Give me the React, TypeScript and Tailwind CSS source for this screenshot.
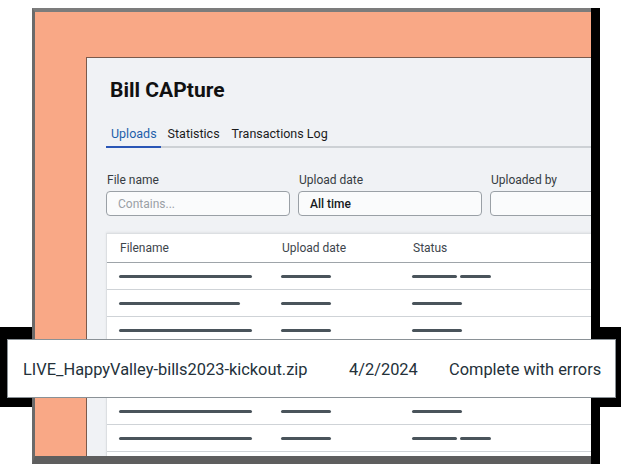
import React from "react";

type Row = { f: number; d: number; s: number[] };

const rows: Row[] = [
  { f: 133, d: 50, s: [45, 31] },
  { f: 121, d: 50, s: [50] },
  { f: 133, d: 50, s: [50] },
  { f: 133, d: 50, s: [50] },
  { f: 133, d: 50, s: [50] },
  { f: 133, d: 50, s: [50] },
  { f: 133, d: 50, s: [45, 31] },
  { f: 133, d: 50, s: [50] },
];

function Bar({ w }: { w: number }) {
  return <div className="h-[3px] rounded-full bg-[#4a545b]" style={{ width: w }} />;
}

export default function App() {
  return (
    <div className="relative w-[621px] h-[464px] overflow-hidden bg-white font-['Roboto',sans-serif]">
      {/* hard shadow behind the highlighted row */}
      <div className="absolute left-0 top-[327px] w-[621px] h-[80px] bg-black" />

      {/* framed illustration */}
      <div className="relative z-10 ml-[32px] mt-[8px] w-[568px] h-[456px] border-r-[9px] border-black">
        <div className="h-full border-t-4 border-l-[3px] border-b-8 border-t-[#7c7c7c] border-l-[#6a6a6a] border-b-[#5e5e5e] bg-[#f9a886] pl-[51px] pt-[45px]">
          <div className="h-full overflow-hidden border-l border-t border-[#7a5a4c] bg-[#f0f2f5]">
            <div className="px-[19px] pt-[18px]">
              <h1 className="pl-[4px] h-[28px] leading-[28px] text-[21px] font-bold text-[#111] whitespace-nowrap">
                Bill CAPture
              </h1>

              <div className="mt-[22px] flex gap-[2px] border-b-2 border-[#cdd1d5] -mr-[20px] text-[12.5px] leading-[16px] whitespace-nowrap">
                <div className="-mb-[2px] border-b-2 border-[#2a56b6] pl-[5px] pr-[4px] pb-[4px] text-[#1d5fab]">Uploads</div>
                <div className="px-[5px] pb-[4px] text-[#1b1b1b]">Statistics</div>
                <div className="px-[5px] pb-[4px] text-[#1b1b1b]">Transactions Log</div>
              </div>

              <div className="mt-[24px] grid grid-cols-[184px_184px_184px] gap-x-[8px] text-[12px] whitespace-nowrap">
                {[
                  { label: "File name", value: "Contains...", ph: true },
                  { label: "Upload date", value: "All time", ph: false },
                  { label: "Uploaded by", value: "", ph: false },
                ].map((c) => (
                  <div key={c.label} className="flex flex-col">
                    <div className="h-[16px] leading-[16px] pl-[1px] text-[#363c42]">{c.label}</div>
                    <div className="mt-[3px] h-[25px] rounded-[4px] border border-[#9aa0a6] bg-[#fafbfc] flex items-center pl-[11px]">
                      <span className={c.ph ? "text-[#9aa0a6]" : "text-[#15191d] font-medium"}>{c.value}</span>
                    </div>
                  </div>
                ))}
              </div>

              <div className="mt-[17px] -mr-[20px] bg-white border-l border-t border-[#dcdfe2] shadow-[0_-1px_2px_rgba(0,0,0,0.06)]">
                <div className="grid grid-cols-[162px_131px_1fr] h-[29px] items-center border-b border-[#9ea4a9] text-[12px] text-[#3d454c] whitespace-nowrap">
                  <div className="pl-[13px]">Filename</div>
                  <div className="pl-[13px]">Upload date</div>
                  <div className="pl-[13px]">Status</div>
                </div>
                {rows.map((r, i) => (
                  <div key={i} className="grid grid-cols-[162px_131px_1fr] h-[27px] items-center border-b border-[#cfd3d7]">
                    <div className="pl-[12px]"><Bar w={r.f} /></div>
                    <div className="pl-[12px]"><Bar w={r.d} /></div>
                    <div className="pl-[12px] flex gap-[3px]">
                      {r.s.map((w, j) => (
                        <Bar key={j} w={w} />
                      ))}
                    </div>
                  </div>
                ))}
              </div>
            </div>
          </div>
        </div>
      </div>

      {/* highlighted row */}
      <div className="absolute z-20 left-[7px] top-[339px] w-[609px] h-[59px] bg-white border-[1.5px] border-[#8a9196] flex items-center pl-[15px] pt-[3px] text-[16.4px] text-[#24313a] whitespace-nowrap">
        <div className="w-[326px]">LIVE_HappyValley-bills2023-kickout.zip</div>
        <div className="w-[100px]">4/2/2024</div>
        <div>Complete with errors</div>
      </div>
    </div>
  );
}
